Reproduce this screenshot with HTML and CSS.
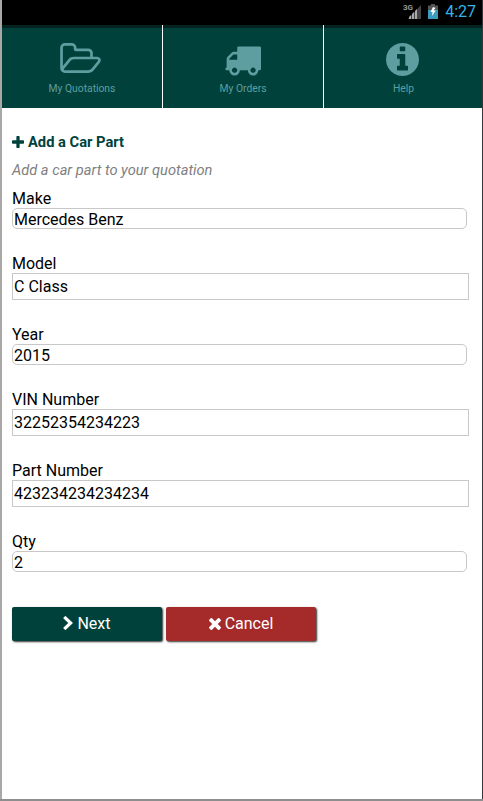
FILE: index.html
```html
<!DOCTYPE html>
<html lang="en">
<head>
<meta charset="utf-8">
<title>Add a Car Part</title>
<link rel="stylesheet" href="styles.css">
</head>
<body>
<div class="screen">
  <header class="status">
    <svg class="signal" viewBox="0 0 20 18"><text x="-1" y="7.500" class="net">3G</text><path d="M17 3V17H4z" fill="#444"/><path d="M5 17v-2l2-2v4zM8 17v-5l2-2v7zM11 17v-8l2-2v10z" fill="#aaa"/></svg>
    <svg class="battery" viewBox="0 0 10 15"><path d="M3 0h4v1.500h3V6H0V1.500h3z" fill="#555"/><path d="M0 6h10v9H0z" fill="#3c9cc0"/><path d="M5 3 2.500 8h2L4 12l3.800-5.500H5.600L7.500 4z" fill="#fff"/></svg>
    <span class="clock">4:27</span>
  </header>
  <nav class="tabs">
    <a class="tab">
      <svg class="folder" viewBox="64 128 1909 1408"><path d="M1845 931q0-35-53-35h-1088q-40 0-85.500 21.500t-71.500 52.500l-294 363q-18 24-18 40 0 35 53 35h1088q40 0 86-22t71-53l294-363q18-22 18-39zm-1141-163h768v-160q0-40-28-68t-68-28h-576q-40 0-68-28t-28-68v-64q0-40-28-68t-68-28h-320q-40 0-68 28t-28 68v853l256-315q44-53 116-87.500t140-34.500zm1269 163q0 62-46 120l-295 363q-43 53-116 87.500t-140 34.500h-1088q-92 0-158-66t-66-158v-960q0-92 66-158t158-66h320q92 0 158 66t66 158v32h544q92 0 158 66t66 158v160h192q54 0 99 24.500t67 70.500q15 32 15 68z"/></svg>
      <span>My Quotations</span>
    </a>
    <a class="tab">
      <svg class="truck" viewBox="0 256 1792 1408"><path d="M640 1408q0-52-38-90t-90-38-90 38-38 90 38 90 90 38 90-38 38-90zm-384-512h384v-256h-158q-13 0-22 9l-195 195q-9 9-9 22v30zm1280 512q0-52-38-90t-90-38-90 38-38 90 38 90 90 38 90-38 38-90zm256-1088v1024q0 15-4 26.500t-13.500 18.500-16.500 11.500-23.500 6-22.500 2-25.500 0-22.500-.5q0 106-75 181t-181 75-181-75-75-181h-384q0 106-75 181t-181 75-181-75-75-181h-64q-3 0-22.500.5t-25.500 0-22.500-2-23.500-6-16.500-11.500-13.500-18.500-4-26.500q0-26 19-45t45-19v-320q0-8-.5-35t0-38 2.500-34.500 6.500-37 14-30.500 22.500-30l198-198q19-19 50.500-32t58.500-13h160v-192q0-26 19-45t45-19h1024q26 0 45 19t19 45z"/></svg>
      <span>My Orders</span>
    </a>
    <a class="tab">
      <svg class="info" viewBox="128 128 1536 1536"><path d="M1152 1376v-160q0-14-9-23t-23-9h-96v-512q0-14-9-23t-23-9h-320q-14 0-23 9t-9 23v160q0 14 9 23t23 9h96v320h-96q-14 0-23 9t-9 23v160q0 14 9 23t23 9h448q14 0 23-9t9-23zm-128-896v-160q0-14-9-23t-23-9h-192q-14 0-23 9t-9 23v160q0 14 9 23t23 9h192q14 0 23-9t9-23zm640 416q0 209-103 385.500t-279.500 279.500-385.500 103-385.500-103-279.500-279.500-103-385.500 103-385.500 279.500-279.500 385.500-103 385.500 103 279.500 279.500 103 385.500z"/></svg>
      <span class="help">Help</span>
    </a>
  </nav>
  <main class="content">
    <h1 class="title"><svg class="plus" viewBox="192 128 1408 1408"><path d="M1600 736v192q0 40-28 68t-68 28h-416v416q0 40-28 68t-68 28h-192q-40 0-68-28t-28-68v-416h-416q-40 0-68-28t-28-68v-192q0-40 28-68t68-28h416v-416q0-40 28-68t68-28h192q40 0 68 28t28 68v416h416q40 0 68 28t28 68z"/></svg><span>Add a Car Part</span></h1>
    <p class="hint">Add a car part to your quotation</p>
    <form>
      <label class="field">Make<input class="select" value="Mercedes Benz"></label>
      <label class="field">Model<input class="text" value="C Class"></label>
      <label class="field">Year<input class="select" value="2015"></label>
      <label class="field">VIN Number<input class="text" value="32252354234223"></label>
      <label class="field">Part Number<input class="text" value="423234234234234"></label>
      <label class="field">Qty<input class="select" value="2"></label>
      <div class="actions">
        <button type="button" class="btn next"><svg class="chevron" viewBox="346 90 1036 1548"><path d="M1363 909l-742 710q-19 19-45 19t-45-19l-166-166q-19-19-19-45t19-45l531-499-531-499q-19-19-19-45t19-45l166-166q19-19 45-19t45 19l742 710q19 19 19 45t-19 45z"/></svg><span>Next</span></button>
        <button type="button" class="btn cancel"><svg class="times" viewBox="302 366 1188 1188"><path d="M1490 1322q0 40-28 68l-136 136q-28 28-68 28t-68-28l-294-294-294 294q-28 28-68 28t-68-28l-136-136q-28-28-28-68t28-68l294-294-294-294q-28-28-28-68t28-68l136-136q28-28 68-28t68 28l294 294 294-294q28-28 68-28t68 28l136 136q28 28 28 68t-28 68l-294 294 294 294q28 28 28 68z"/></svg><span>Cancel</span></button>
      </div>
    </form>
  </main>
</div>
</body>
</html>
```
FILE: styles.css
```css
* { box-sizing: border-box; }
html, body { height: 100%; overflow: hidden; }
body {
  margin: 0;
  padding: 0 1px 2px 2px;
  background: linear-gradient(#8e8e8e, #8e8e8e) left bottom / 100% 2px no-repeat,
    linear-gradient(#35383a, #35383a) right top / 1px 100% no-repeat, #aaa8a7;
  font: 16px/19px Roboto, sans-serif;
  color: #000;
}
svg { display: block; fill: currentColor; flex: none; }
.screen { height: 799px; background: #fff; }
.status {
  height: 25px;
  background: #000;
  display: flex;
  justify-content: flex-end;
  padding-right: 6px;
}
.signal { width: 20px; height: 18px; margin: 2px 4px 0 0; overflow: visible; }
.net { font: bold 8px Roboto, sans-serif; fill: #999; }
.battery { width: 10px; height: 15px; margin: 4px 7px 0 0; }
.clock { color: #33b5e5; font-size: 16px; line-height: 24px; }
.tabs {
  height: 83px;
  display: grid;
  grid-template-columns: 161px 161px 1fr;
  background: #00423b;
  border-top: 3px solid #04221f;
}
.tab {
  display: flex;
  flex-direction: column;
  align-items: center;
  justify-content: flex-end;
  padding: 0 1px 12px 0;
  margin-top: -3px;
  color: #5f9ea0;
  font-size: 10.3px;
  line-height: 14px;
}
.tab + .tab { box-shadow: -1px 0 #fff; }
.folder { width: 41px; height: 30px; margin: 0 3px 9px 0; }
.truck { width: 37px; height: 30px; margin: 0 1px 6px 0; }
.info { width: 33px; height: 33px; margin: 0 1px 6px 0; }
.help { padding-left: 2px; }
.content { padding: 25px 13px 0 10px; }
.title {
  display: flex;
  align-items: center;
  gap: 4px;
  margin: 0;
  font-size: 14.7px;
  line-height: 19px;
  color: #00423b;
}
.plus { width: 12px; height: 12px; margin-top: -1px; }
.hint {
  margin: 9px 0;
  font-size: 14.65px;
  font-style: italic;
  color: #808080;
}
.field { display: block; margin-bottom: 25px; }
.select, .text {
  display: block;
  border: 1px solid #c8c8c8;
  margin: 0;
  padding: 0 1px;
  background: #fff;
  font: inherit;
  color: #000;
  outline: 0;
}
.select {
  width: 455px;
  height: 21px;
  padding-top: 2px;
  border-radius: 5px;
  line-height: 17px;
}
.text { width: 457px; height: 27px; }
.actions { display: flex; gap: 4px; padding-top: 10px; }
.btn {
  width: 150px;
  height: 34px;
  display: flex;
  align-items: center;
  justify-content: center;
  gap: 4px;
  border: 0;
  padding: 0 0 1px;
  border-radius: 2px;
  box-shadow: 1px 1px 2px #333;
  color: #fff;
  font: inherit;
}
.next { background: #00423b; }
.cancel { background: #a52a2a; }
.chevron { width: 10px; height: 14px; margin-top: -1px; }
.times { width: 12px; height: 12px; margin-top: 1px; }
```
